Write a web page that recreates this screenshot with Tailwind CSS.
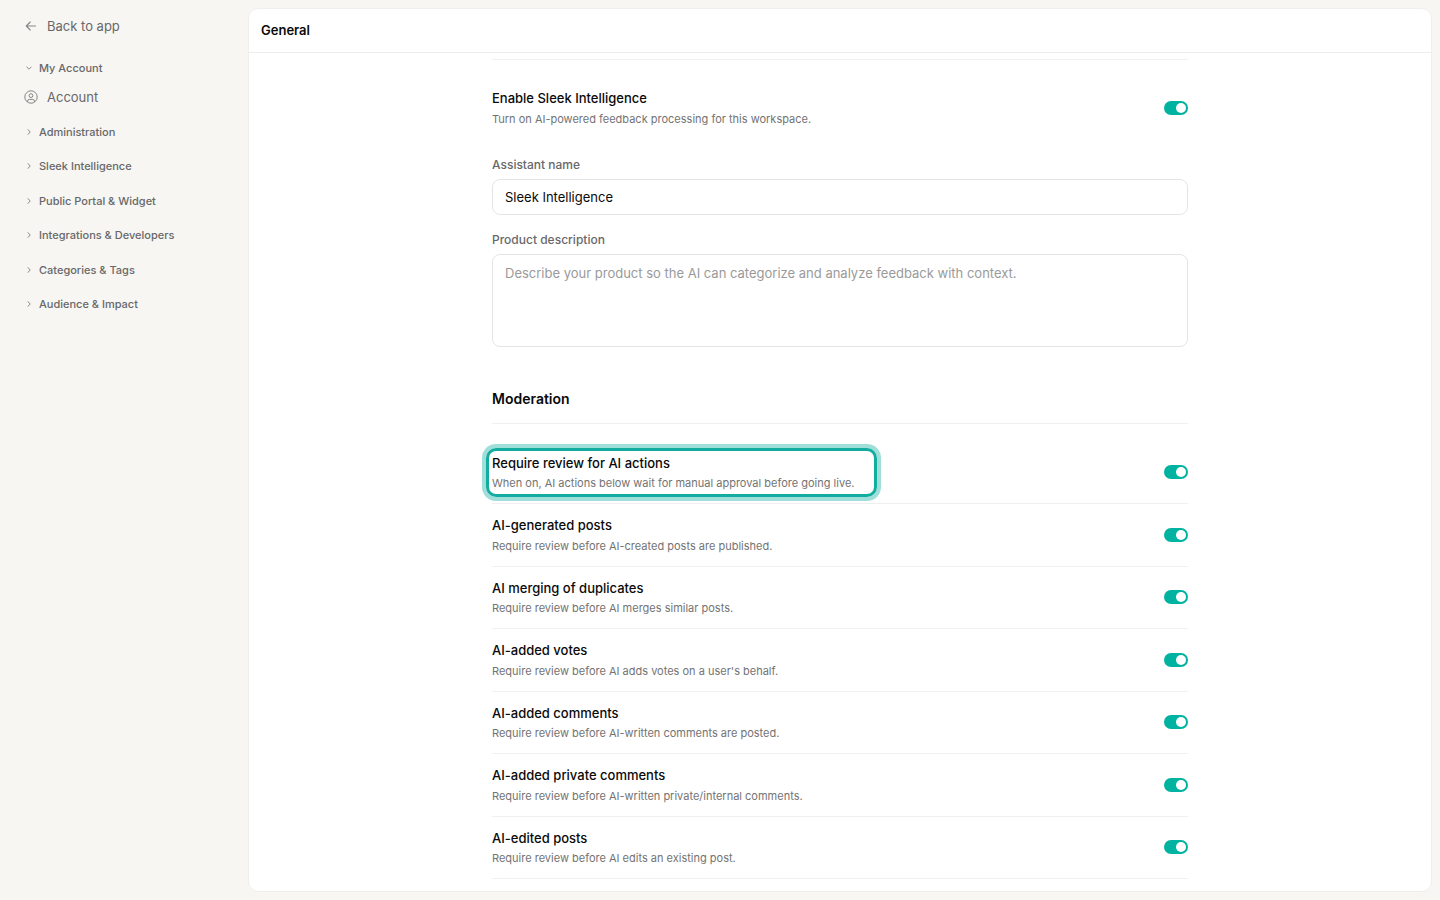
<!DOCTYPE html>
<html lang="en">

<head>
  <meta charset="UTF-8">
  <meta name="viewport" content="width=device-width, initial-scale=1.0">
  <title>General</title>
  <script src="https://cdn.jsdelivr.net/npm/@tailwindcss/browser@4"></script>
</head>

<body class="flex h-screen overflow-hidden bg-[#f7f6f2] font-['Inter',sans-serif] text-[13px] leading-normal text-[#0a0a0a] antialiased">
  <!-- Sidebar -->
  <aside class="w-60 shrink-0 px-6 pt-4 text-[#68686a]">
    <a href="#" class="flex items-center gap-[9px] leading-5">
      <svg class="size-3.5 text-[#858585]" viewBox="0 0 14 14" fill="none" stroke="currentColor" stroke-width="1.1" stroke-linecap="round" stroke-linejoin="round">
        <path d="M11.5 7h-9M6.200 3 2.300 7l3.900 4" />
      </svg>
      <span>Back to app</span>
    </a>

    <nav class="mt-6 text-[11px] font-medium">
      <button type="button" class="flex items-center gap-[5px]">
        <svg class="size-2.5 text-[#8b8b8b]" viewBox="0 0 10 10" fill="none" stroke="currentColor" stroke-linecap="round" stroke-linejoin="round">
          <path d="M2.8 4 5 6.2 7.2 4" />
        </svg>
        My Account
      </button>
      <a href="#" class="mt-2.5 flex items-center gap-[9px] text-[13px] leading-5 font-normal">
        <svg class="size-3.5 text-[#858585]" viewBox="0 0 14 14" fill="none" stroke="currentColor">
          <circle cx="7" cy="7" r="6.2" />
          <circle cx="7" cy="5.6" r="1.9" />
          <path d="M3.6 12V11a1.7 1.7 0 0 1 1.7-1.6h3.4a1.7 1.7 0 0 1 1.7 1.6v1" />
        </svg>
        Account
      </a>
      <ul class="mt-[17px] flex flex-col gap-4.5">
        <li><button type="button" class="flex items-center gap-[5px]"><svg class="size-2.5 text-[#8b8b8b]" viewBox="0 0 10 10" fill="none" stroke="currentColor" stroke-linecap="round" stroke-linejoin="round"><path d="M4 2.6 6.2 5 4 7.4" /></svg>Administration</button></li>
        <li><button type="button" class="flex items-center gap-[5px]"><svg class="size-2.5 text-[#8b8b8b]" viewBox="0 0 10 10" fill="none" stroke="currentColor" stroke-linecap="round" stroke-linejoin="round"><path d="M4 2.6 6.2 5 4 7.4" /></svg>Sleek Intelligence</button></li>
        <li><button type="button" class="flex items-center gap-[5px]"><svg class="size-2.5 text-[#8b8b8b]" viewBox="0 0 10 10" fill="none" stroke="currentColor" stroke-linecap="round" stroke-linejoin="round"><path d="M4 2.6 6.2 5 4 7.4" /></svg>Public Portal &amp; Widget</button></li>
        <li><button type="button" class="flex items-center gap-[5px]"><svg class="size-2.5 text-[#8b8b8b]" viewBox="0 0 10 10" fill="none" stroke="currentColor" stroke-linecap="round" stroke-linejoin="round"><path d="M4 2.6 6.2 5 4 7.4" /></svg>Integrations &amp; Developers</button></li>
        <li><button type="button" class="flex items-center gap-[5px]"><svg class="size-2.5 text-[#8b8b8b]" viewBox="0 0 10 10" fill="none" stroke="currentColor" stroke-linecap="round" stroke-linejoin="round"><path d="M4 2.6 6.2 5 4 7.4" /></svg>Categories &amp; Tags</button></li>
        <li><button type="button" class="flex items-center gap-[5px]"><svg class="size-2.5 text-[#8b8b8b]" viewBox="0 0 10 10" fill="none" stroke="currentColor" stroke-linecap="round" stroke-linejoin="round"><path d="M4 2.6 6.2 5 4 7.4" /></svg>Audience &amp; Impact</button></li>
      </ul>
    </nav>
  </aside>
  <!-- END Sidebar -->

  <main class="m-2 flex flex-1 flex-col overflow-hidden rounded-[10px] border border-[#efeeec] bg-white">
    <header class="flex h-11 shrink-0 items-center border-b border-[#ededed] px-3">
      <h1 class="font-semibold">General</h1>
    </header>

    <div class="mx-auto w-full max-w-[696px] flex-1 pt-1.5">
      <!-- Assistant -->
      <section class="border-t border-[#f0f0f0] pt-[29px]">
        <div class="flex items-center justify-between">
          <div>
            <label for="enable" class="block font-medium">Enable Sleek Intelligence</label>
            <p class="mt-0.5 text-[11px] leading-4 text-[#737373]">Turn on AI-powered feedback processing for this workspace.</p>
          </div>
          <input id="enable" type="checkbox" role="switch" checked class="flex h-3.5 w-6 appearance-none items-center justify-end rounded-full bg-[#d4d4d4] px-0.5 before:size-2.5 before:rounded-full before:bg-white checked:bg-[#00b3a1]">
        </div>

        <label for="assistant-name" class="mt-7 block text-xs leading-5 font-medium text-[#68686a]">Assistant name</label>
        <input id="assistant-name" type="text" value="Sleek Intelligence" class="mt-1 block h-9 w-full rounded-lg border border-[#e4e4e4] px-3">

        <label for="description" class="mt-[15px] block text-xs leading-5 font-medium text-[#68686a]">Product description</label>
        <textarea id="description" placeholder="Describe your product so the AI can categorize and analyze feedback with context." class="mt-1 block h-[93px] w-full resize-none rounded-lg border border-[#e4e4e4] px-3 py-[9px] placeholder:text-[#9a9a9a]"></textarea>
      </section>
      <!-- END Assistant -->

      <!-- Moderation -->
      <section class="mt-[42px]">
        <h2 class="border-b border-[#f0f0f0] pb-3.5 text-sm font-semibold">Moderation</h2>

        <ul class="mt-[18px]">
          <li class="flex items-center justify-between border-b border-[#f0f0f0] py-3">
            <div class="relative min-w-[379px]">
              <label for="review" class="block font-medium">Require review for AI actions</label>
              <p class="mt-0.5 text-[11px] leading-4 text-[#737373]">When on, AI actions below wait for manual approval before going live.</p>
              <div class="pointer-events-none absolute -inset-1.5 rounded-[10px] border-3 border-[#12ada0] ring-4 ring-[#12ada0]/40"></div>
            </div>
            <input id="review" type="checkbox" role="switch" checked class="flex h-3.5 w-6 appearance-none items-center justify-end rounded-full bg-[#d4d4d4] px-0.5 before:size-2.5 before:rounded-full before:bg-white checked:bg-[#00b3a1]">
          </li>
          <li class="flex items-center justify-between border-b border-[#f0f0f0] py-3">
            <div>
              <label for="posts" class="block font-medium">AI-generated posts</label>
              <p class="mt-0.5 text-[11px] leading-4 text-[#737373]">Require review before AI-created posts are published.</p>
            </div>
            <input id="posts" type="checkbox" role="switch" checked class="flex h-3.5 w-6 appearance-none items-center justify-end rounded-full bg-[#d4d4d4] px-0.5 before:size-2.5 before:rounded-full before:bg-white checked:bg-[#00b3a1]">
          </li>
          <li class="flex items-center justify-between border-b border-[#f0f0f0] py-3">
            <div>
              <label for="merging" class="block font-medium">AI merging of duplicates</label>
              <p class="mt-0.5 text-[11px] leading-4 text-[#737373]">Require review before AI merges similar posts.</p>
            </div>
            <input id="merging" type="checkbox" role="switch" checked class="flex h-3.5 w-6 appearance-none items-center justify-end rounded-full bg-[#d4d4d4] px-0.5 before:size-2.5 before:rounded-full before:bg-white checked:bg-[#00b3a1]">
          </li>
          <li class="flex items-center justify-between border-b border-[#f0f0f0] py-3">
            <div>
              <label for="votes" class="block font-medium">AI-added votes</label>
              <p class="mt-0.5 text-[11px] leading-4 text-[#737373]">Require review before AI adds votes on a user's behalf.</p>
            </div>
            <input id="votes" type="checkbox" role="switch" checked class="flex h-3.5 w-6 appearance-none items-center justify-end rounded-full bg-[#d4d4d4] px-0.5 before:size-2.5 before:rounded-full before:bg-white checked:bg-[#00b3a1]">
          </li>
          <li class="flex items-center justify-between border-b border-[#f0f0f0] py-3">
            <div>
              <label for="comments" class="block font-medium">AI-added comments</label>
              <p class="mt-0.5 text-[11px] leading-4 text-[#737373]">Require review before AI-written comments are posted.</p>
            </div>
            <input id="comments" type="checkbox" role="switch" checked class="flex h-3.5 w-6 appearance-none items-center justify-end rounded-full bg-[#d4d4d4] px-0.5 before:size-2.5 before:rounded-full before:bg-white checked:bg-[#00b3a1]">
          </li>
          <li class="flex items-center justify-between border-b border-[#f0f0f0] py-3">
            <div>
              <label for="private-comments" class="block font-medium">AI-added private comments</label>
              <p class="mt-0.5 text-[11px] leading-4 text-[#737373]">Require review before AI-written private/internal comments.</p>
            </div>
            <input id="private-comments" type="checkbox" role="switch" checked class="flex h-3.5 w-6 appearance-none items-center justify-end rounded-full bg-[#d4d4d4] px-0.5 before:size-2.5 before:rounded-full before:bg-white checked:bg-[#00b3a1]">
          </li>
          <li class="flex items-center justify-between border-b border-[#f0f0f0] py-3">
            <div>
              <label for="edited" class="block font-medium">AI-edited posts</label>
              <p class="mt-0.5 text-[11px] leading-4 text-[#737373]">Require review before AI edits an existing post.</p>
            </div>
            <input id="edited" type="checkbox" role="switch" checked class="flex h-3.5 w-6 appearance-none items-center justify-end rounded-full bg-[#d4d4d4] px-0.5 before:size-2.5 before:rounded-full before:bg-white checked:bg-[#00b3a1]">
          </li>
        </ul>
      </section>
      <!-- END Moderation -->
    </div>
  </main>
</body>

</html>
